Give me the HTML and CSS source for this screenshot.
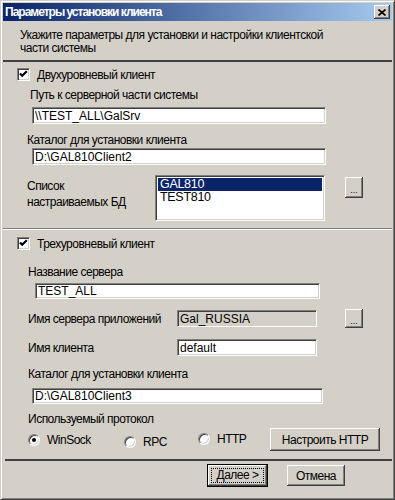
FILE: index.html
```html
<!DOCTYPE html>
<html lang="ru">
<head>
    <meta charset="UTF-8">
    <meta name="viewport" content="width=device-width, initial-scale=1.0">
    <title>Параметры установки клиента</title>
    <link rel="stylesheet" href="styles.css">
</head>
<body>
    <div class="window">
        <div class="titlebar">
            <span class="title">Параметры установки клиента</span>
            <span class="close">
                <svg width="8" height="7" viewBox="0 0 8 7"><path d="M0.5 0.5 L7.5 6.5 M7.5 0.5 L0.5 6.5" stroke="#000" stroke-width="1.6"/></svg>
            </span>
        </div>
        <div class="header">Укажите параметры для установки и настройки клиентской<br>части системы</div>
        <div class="sep-dark"></div>

        <label class="check-row first">
            <span class="checkbox"><svg width="9" height="9" viewBox="0 0 9 9"><path d="M1 3.5 L3.2 5.8 L7.8 1.2" stroke="#000" stroke-width="2.2" fill="none"/></svg></span>
            Двухуровневый клиент
        </label>
        <div class="caption path-caption">Путь к серверной части системы</div>
        <input class="edit path-edit" type="text" value="\\TEST_ALL\GalSrv">
        <div class="caption dir-caption">Каталог для установки клиента</div>
        <input class="edit dir-edit" type="text" value="D:\GAL810Client2">

        <div class="db-row">
            <div class="db-caption">Список<br>настраиваемых БД</div>
            <div class="listbox">
                <div class="item selected">GAL810</div>
                <div class="item">TEST810</div>
            </div>
            <button class="btn dots db-dots">...</button>
        </div>

        <div class="sep-etched"></div>

        <label class="check-row second">
            <span class="checkbox"><svg width="9" height="9" viewBox="0 0 9 9"><path d="M1 3.5 L3.2 5.8 L7.8 1.2" stroke="#000" stroke-width="2.2" fill="none"/></svg></span>
            Трехуровневый клиент
        </label>
        <div class="caption server-caption">Название сервера</div>
        <input class="edit server-edit" type="text" value="TEST_ALL">

        <div class="field-row app-row">
            <span class="field-label">Имя сервера приложений</span>
            <input class="edit short-edit disabled" type="text" value="Gal_RUSSIA" readonly>
            <button class="btn dots app-dots">...</button>
        </div>
        <div class="field-row client-row">
            <span class="field-label">Имя клиента</span>
            <input class="edit short-edit" type="text" value="default">
        </div>

        <div class="caption dir3-caption">Каталог для установки клиента</div>
        <input class="edit dir3-edit" type="text" value="D:\GAL810Client3">

        <div class="caption proto-caption">Используемый протокол</div>
        <div class="proto-row">
            <label class="radio-item winsock"><span class="radio checked"></span>WinSock</label>
            <label class="radio-item rpc"><span class="radio"></span>RPC</label>
            <label class="radio-item http"><span class="radio"></span>HTTP</label>
            <button class="btn http-btn">Настроить HTTP</button>
        </div>

        <div class="sep-dark bottom"></div>

        <div class="footer">
            <button class="btn default-btn"><span class="focus"><u>Д</u>алее &gt;</span></button>
            <button class="btn cancel-btn">Отмена</button>
        </div>
    </div>
</body>
</html>
```

FILE: styles.css
```css
body {
    margin: 0;
    font-family: "Liberation Sans", Arial, sans-serif;
    font-size: 12px;
    letter-spacing: -0.5px;
    color: #000;
    background: #d4d0c8;
}
.window {
    width: 395px;
    height: 500px;
    box-sizing: border-box;
    background: #d4d0c8;
    border: 1px solid;
    border-color: #d4d0c8 #404040 #404040 #d4d0c8;
    box-shadow: inset 1px 1px #fff, inset -1px -1px #808080;
    padding: 2px;
    display: flex;
    flex-direction: column;
    align-items: flex-start;
}
.titlebar {
    align-self: stretch;
    height: 18px;
    display: flex;
    align-items: center;
    justify-content: space-between;
    padding: 0 2px;
    background: linear-gradient(to right, #0a246a, #a6caf0);
}
.title {
    color: #fff;
    font-weight: bold;
    font-size: 12px;
    letter-spacing: -1px;
}
.close {
    width: 16px;
    height: 14px;
    box-sizing: border-box;
    display: flex;
    align-items: center;
    justify-content: center;
    background: #d4d0c8;
    box-shadow: inset -1px -1px #404040, inset 1px 1px #fff, inset -2px -2px #808080;
}

.header {
    margin-top: 8px;
    padding-left: 17px;
    line-height: 13px;
}
.sep-dark {
    align-self: stretch;
    height: 2px;
    margin-top: 5px;
    background: #404040;
}
.sep-dark.bottom {
    margin-top: 8px;
    margin-left: 2px;
}
.sep-etched {
    align-self: stretch;
    height: 0;
    margin-top: 7px;
    border-top: 1px solid #808080;
    border-bottom: 1px solid #fff;
}

/* checkboxes */
.check-row {
    display: flex;
    align-items: center;
    gap: 7px;
    height: 13px;
    margin-left: 14px;
}
.check-row.first { margin-top: 6px; }
.check-row.second { margin-top: 7px; }
.checkbox {
    width: 13px;
    height: 13px;
    box-sizing: border-box;
    background: #fff;
    border: 1px solid;
    border-color: #808080 #fff #fff #808080;
    box-shadow: inset 1px 1px #404040, inset -1px -1px #d4d0c8;
    display: flex;
    align-items: center;
    justify-content: center;
}

/* captions above fields */
.caption {
    height: 14px;
    line-height: 14px;
    margin-left: 25px;
}
.path-caption { margin-top: 7px; margin-left: 27px; }
.dir-caption { margin-top: 9px; margin-left: 24px; }
.server-caption { margin-top: 15px; }
.dir3-caption { margin-top: 11px; }
.proto-caption { margin-top: 8px; }

/* edit fields */
.edit {
    box-sizing: border-box;
    height: 17px;
    padding: 0 2px;
    margin: 0;
    font-family: inherit;
    font-size: 12px;
    letter-spacing: 0;
    color: #000;
    background: #fff;
    border: 1px solid;
    border-color: #808080 #fff #fff #808080;
    box-shadow: inset 1px 1px #404040, inset -1px -1px #d4d0c8;
    outline: none;
}
.edit.disabled { background: #d4d0c8; }
.path-edit { margin-top: 5px; margin-left: 29px; width: 294px; }
.dir-edit { margin-top: 1px; margin-left: 29px; width: 294px; }
.server-edit { margin-top: 4px; margin-left: 32px; width: 285px; height: 16px; }
.dir3-edit { margin-top: 7px; margin-left: 29px; width: 291px; height: 16px; }
.short-edit { width: 140px; }

/* database list */
.db-row {
    display: flex;
    align-items: flex-start;
    margin-top: 10px;
}
.db-caption {
    width: 128px;
    margin-left: 24px;
    margin-top: 3px;
    line-height: 16px;
}
.listbox {
    width: 170px;
    height: 46px;
    box-sizing: border-box;
    padding: 2px;
    background: #fff;
    border: 1px solid;
    border-color: #808080 #fff #fff #808080;
    box-shadow: inset 1px 1px #404040, inset -1px -1px #d4d0c8;
}
.item {
    height: 13px;
    line-height: 13px;
    padding-left: 2px;
    font-size: 12.5px;
    letter-spacing: -0.3px;
}
.item.selected {
    background: #0a246a;
    color: #fff;
}

/* buttons */
.btn {
    box-sizing: border-box;
    padding: 0;
    margin: 0;
    font-family: inherit;
    font-size: 12px;
    letter-spacing: -0.5px;
    color: #000;
    background: #d4d0c8;
    border: none;
    box-shadow: inset -1px -1px #404040, inset 1px 1px #fff, inset -2px -2px #808080, inset 2px 2px #d4d0c8;
}
.dots {
    width: 18px;
    font-size: 9px;
    letter-spacing: 0;
    padding-top: 4px;
}
.db-dots { height: 21px; margin-left: 20px; margin-top: 2px; }
.app-dots { height: 19px; margin-left: 28px; }

.field-row {
    display: flex;
    align-items: center;
}
.field-label {
    width: 149px;
    margin-left: 25px;
}
.app-row { margin-top: 10px; height: 19px; }
.client-row { margin-top: 11px; height: 17px; }

/* protocol */
.proto-row {
    display: flex;
    align-items: center;
    height: 23px;
    margin-top: 2px;
}
.radio-item {
    display: flex;
    align-items: center;
    gap: 7px;
}
.winsock { margin-left: 25px; width: 96px; }
.rpc { width: 74px; margin-top: 4px; }
.http { width: 72px; margin-top: -2px; }
.radio {
    position: relative;
    width: 12px;
    height: 12px;
    box-sizing: border-box;
    border-radius: 50%;
    background: #fff;
    border: 1px solid;
    border-color: #808080 #fff #fff #808080;
    box-shadow: inset 1px 1px #404040, inset -1px -1px #d4d0c8;
}
.radio.checked::after {
    content: "";
    position: absolute;
    left: 3px;
    top: 3px;
    width: 4px;
    height: 4px;
    border-radius: 50%;
    background: #000;
}
.http-btn {
    width: 110px;
    height: 23px;
}

/* footer */
.footer {
    display: flex;
    align-items: flex-start;
    margin-top: 3px;
    padding-left: 204px;
}
.default-btn {
    width: 61px;
    height: 23px;
    border: 1px solid #000;
    box-shadow: inset -1px -1px #404040, inset 1px 1px #fff, inset -2px -2px #808080;
    padding: 3px;
}
.focus {
    display: block;
    height: 100%;
    box-sizing: border-box;
    border: 1px dotted #000;
    line-height: 13px;
}
.cancel-btn {
    width: 58px;
    height: 21px;
    margin-left: 19px;
    margin-top: 1px;
}
```
